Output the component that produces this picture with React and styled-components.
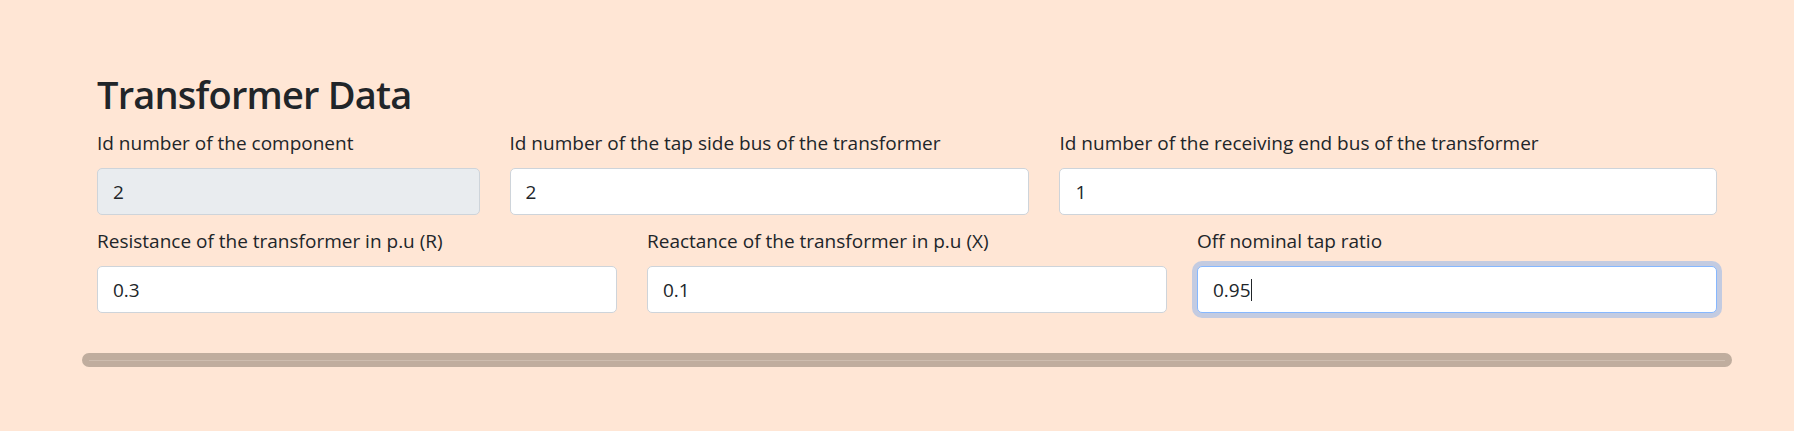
import React from "react";
import styled, { createGlobalStyle, css } from "styled-components";

const GlobalStyle = createGlobalStyle`
  html, body {
    margin: 0;
    padding: 0;
    background: #ffe6d5;
  }
  body {
    font-family: "Open Sans", "Noto Sans", sans-serif;
    color: #212529;
  }
  * { box-sizing: border-box; }
`;

const Page = styled.main`
  width: 1650px;
  margin-left: 82px;
  padding: 70px 0 64px;
`;

const Section = styled.section`
  padding: 0 15px;
`;

const Title = styled.h2`
  margin: 0 0 10px;
  font-size: 38px;
  line-height: 48px;
  font-weight: 600;
  letter-spacing: -0.8px;
`;

const Row = styled.div`
  display: flex;
  margin: ${(p) => (p.$gapTop ? "11px" : "0")} -15px 0;
`;

const Col = styled.div`
  flex: 0 0 ${(p) => (p.$span / 12) * 100}%;
  max-width: ${(p) => (p.$span / 12) * 100}%;
  padding: 0 15px;
`;

const Label = styled.label`
  display: block;
  margin-bottom: 10px;
  font-size: 19px;
  line-height: 30px;
  color: #212529;
`;

const Field = styled.div`
  position: relative;
`;

const Input = styled.input`
  display: block;
  width: 100%;
  height: 47px;
  padding: 7px 15px;
  font-family: inherit;
  font-size: 19px;
  line-height: 30px;
  color: #212529;
  background: ${(p) => (p.disabled ? "#e9ecef" : "#ffffff")};
  border: 1px solid #ced4da;
  border-radius: 5px;
  outline: none;
  ${(p) =>
    p.$focused &&
    css`
      border-color: #86b7fe;
      box-shadow: 0 0 0 5px #c3cbe1;
    `}
  &:disabled { opacity: 1; color: #212529; }
`;

const CaretLayer = styled.div`
  position: absolute;
  inset: 0;
  padding: 0 16px;
  display: flex;
  align-items: center;
  font-size: 19px;
  pointer-events: none;
`;

const Ghost = styled.span`
  color: transparent;
`;

const Caret = styled.span`
  display: inline-block;
  width: 1px;
  height: 22px;
  background: #212529;
`;

const Divider = styled.div`
  position: relative;
  margin-top: 40px;
  height: 14px;
  border-radius: 7px;
  background: #c0ad9e;
  &::after {
    content: "";
    position: absolute;
    left: 7px;
    right: 7px;
    top: 7px;
    height: 1px;
    background: #cebdaf;
  }
`;

const rows = [
  [
    { span: 3, label: "Id number of the component", value: "2", disabled: true },
    { span: 4, label: "Id number of the tap side bus of the transformer", value: "2" },
    { span: 5, label: "Id number of the receiving end bus of the transformer", value: "1" },
  ],
  [
    { span: 4, label: "Resistance of the transformer in p.u (R)", value: "0.3" },
    { span: 4, label: "Reactance of the transformer in p.u (X)", value: "0.1" },
    { span: 4, label: "Off nominal tap ratio", value: "0.95", focused: true },
  ],
];

export default function App() {
  return (
    <>
      <GlobalStyle />
      <Page>
        <Section>
          <Title>Transformer Data</Title>
          {rows.map((row, i) => (
            <Row key={i} $gapTop={i > 0}>
              {row.map((f) => (
                <Col key={f.label} $span={f.span}>
                  <Label>{f.label}</Label>
                  <Field>
                    <Input
                      type="text"
                      defaultValue={f.value}
                      disabled={f.disabled}
                      $focused={f.focused}
                      readOnly={!f.disabled}
                    />
                    {f.focused && (
                      <CaretLayer>
                        <Ghost>{f.value}</Ghost>
                        <Caret />
                      </CaretLayer>
                    )}
                  </Field>
                </Col>
              ))}
            </Row>
          ))}
        </Section>
        <Divider />
      </Page>
    </>
  );
}
